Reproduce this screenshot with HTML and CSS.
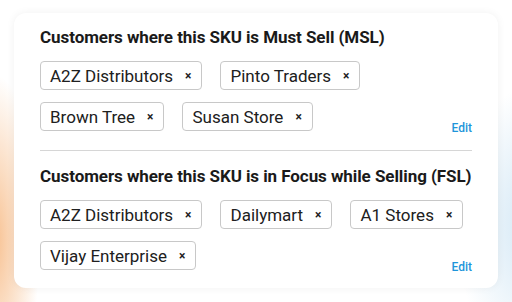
FILE: index.html
```html
<!DOCTYPE html>
<html>
<head>
<meta charset="utf-8">
<link rel="stylesheet" href="styles.css">
</head>
<body>
<div class="page">
  <div class="card">
    <section class="group">
      <h2 class="title">Customers where this SKU is Must Sell (MSL)</h2>
      <div class="chips">
        <span class="chip"><span class="label">A2Z Distributors</span><span class="x">×</span></span>
        <span class="chip"><span class="label">Pinto Traders</span><span class="x">×</span></span>
        <span class="chip"><span class="label">Brown Tree</span><span class="x">×</span></span>
        <span class="chip"><span class="label">Susan Store</span><span class="x">×</span></span>
        <a class="edit">Edit</a>
      </div>
    </section>
    <hr class="divider">
    <section class="group">
      <h2 class="title">Customers where this SKU is in Focus while Selling (FSL)</h2>
      <div class="chips">
        <span class="chip"><span class="label">A2Z Distributors</span><span class="x">×</span></span>
        <span class="chip"><span class="label">Dailymart</span><span class="x">×</span></span>
        <span class="chip"><span class="label">A1 Stores</span><span class="x">×</span></span>
        <span class="chip"><span class="label">Vijay Enterprise</span><span class="x">×</span></span>
        <a class="edit">Edit</a>
      </div>
    </section>
  </div>
</div>
</body>
</html>
```
FILE: styles.css
```css
html, body {
  margin: 0;
  padding: 0;
}
body {
  width: 512px;
  height: 302px;
  overflow: hidden;
  font-family: Roboto, "Liberation Sans", sans-serif;
  background:
    radial-gradient(ellipse 45px 165px at -5px 240px, rgba(247, 190, 140, 0.95), rgba(247, 190, 140, 0) 100%),
    radial-gradient(ellipse 80px 140px at 535px 225px, rgba(190, 220, 240, 0.7), rgba(190, 220, 240, 0) 100%),
    #ffffff;
}
.page {
  padding: 13px 14px 14px 14px;
}
.card {
  box-sizing: border-box;
  width: 484px;
  height: 275px;
  background: #ffffff;
  border-radius: 12px;
  box-shadow: 0 0 8px rgba(0, 0, 0, 0.06);
  padding: 14px 26px 0 26px;
}
.title {
  margin: 0 0 14px 0;
  font-size: 17px;
  line-height: 20px;
  font-weight: 700;
  color: #1a1a1a;
  white-space: nowrap;
  letter-spacing: -0.07px;
}
.chips {
  display: flex;
  flex-wrap: wrap;
  column-gap: 18px;
  row-gap: 12px;
}
.chip {
  box-sizing: border-box;
  height: 29px;
  display: flex;
  align-items: center;
  padding: 0 10px 0 9px;
  border: 1px solid #c8c8c8;
  border-radius: 4px;
  font-size: 17px;
  color: #202020;
}
.x {
  margin-left: 12px;
  font-size: 12px;
  font-weight: 700;
  color: #222;
}
.edit {
  margin-left: auto;
  align-self: flex-end;
  font-size: 12px;
  line-height: 12px;
  margin-bottom: -3px;
  font-weight: 500;
  color: #1e95da;
}
.divider {
  border: 0;
  border-top: 1px solid #d6d6d6;
  margin: 19px 0 15px 0;
}
```
